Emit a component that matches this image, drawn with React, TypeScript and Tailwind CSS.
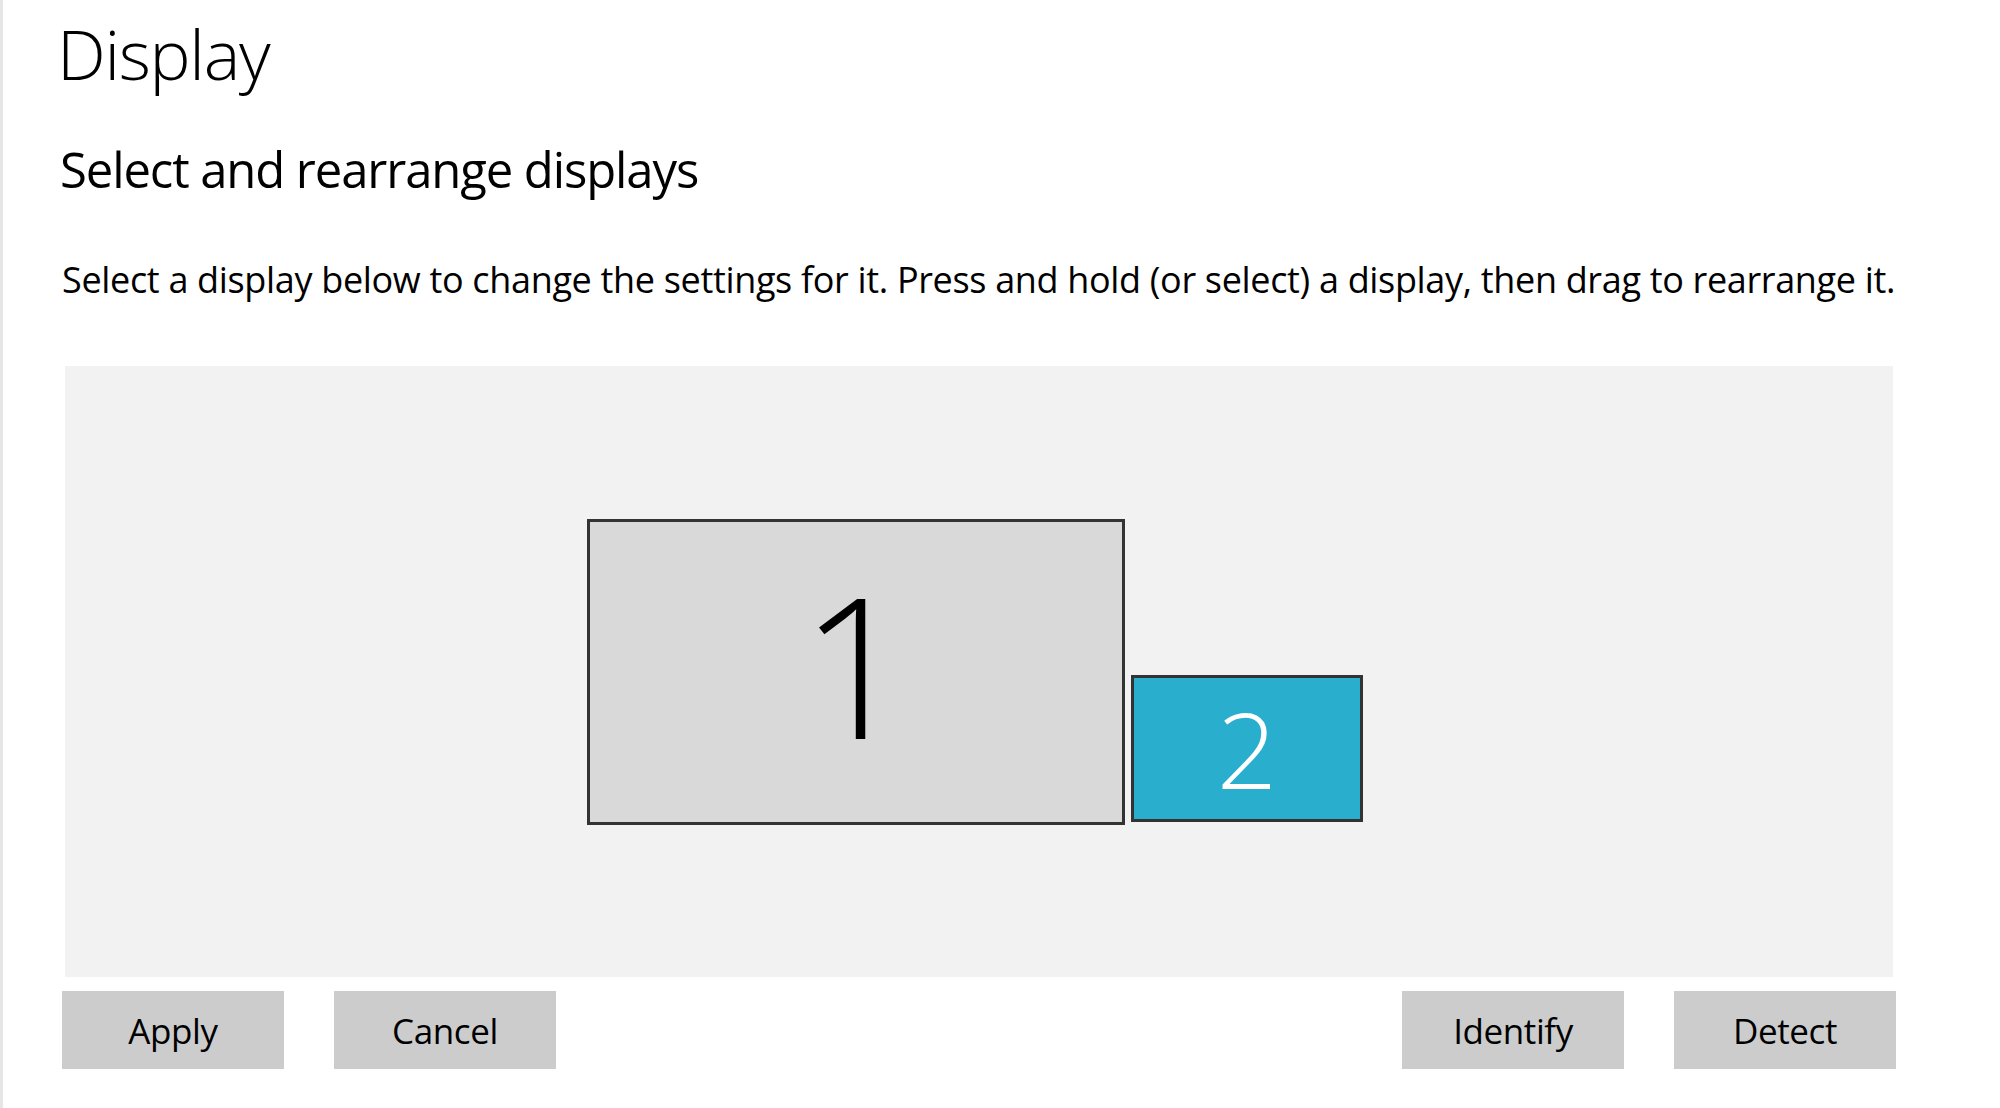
import React from "react";

const font = { fontFamily: '"Open Sans", "Noto Sans", sans-serif' };

function Monitor({
  n,
  className,
  numClass,
}: {
  n: string;
  className: string;
  numClass: string;
}) {
  return (
    <div
      className={`flex items-center justify-center border-[3px] border-[#333333] ${className}`}
    >
      <span className={numClass}>{n}</span>
    </div>
  );
}

function Btn({ label }: { label: string }) {
  return (
    <button className="flex h-[78px] w-[222px] items-center justify-center bg-[#cccccc] text-[35px] leading-none tracking-[-0.4px] text-black">
      {label}
    </button>
  );
}

export default function App() {
  return (
    <div className="flex h-[1108px] w-full bg-white text-black" style={font}>
      {/* left edge line */}
      <div className="w-[3px] shrink-0 bg-[#e6e6e6]" />

      <div className="flex flex-col pl-[59px] pt-[19px]">
        <h1 className="-ml-[5px] text-[69px] font-light leading-none tracking-[-1.3px]">
          Display
        </h1>

        <h2 className="-ml-[2px] mt-[57px] text-[49px] font-normal leading-none tracking-[-1.1px]">
          Select and rearrange displays
        </h2>

        <p className="mt-[68px] text-[36px] leading-none tracking-[-0.33px]">
          Select a display below to change the settings for it. Press and hold
          (or select) a display, then drag to rearrange it.
        </p>

        {/* arrangement canvas */}
        <div className="ml-[3px] mt-[68px] flex h-[611px] w-[1828px] items-center justify-center bg-[#f2f2f2]">
          <div className="flex items-end gap-[6px] pr-[8px]">
            <Monitor
              n="1"
              className="h-[306px] w-[538px] bg-[#d9d9d9]"
              numClass="mb-[18px] text-[196px] font-light leading-none text-black"
            />
            <Monitor
              n="2"
              className="mb-[3px] h-[147px] w-[232px] bg-[#2aaecd]"
              numClass="text-[106px] font-light leading-none text-white"
            />
          </div>
        </div>

        {/* actions */}
        <div className="mt-[14px] flex w-[1834px] justify-between">
          <div className="flex gap-[50px]">
            <Btn label="Apply" />
            <Btn label="Cancel" />
          </div>
          <div className="flex gap-[50px]">
            <Btn label="Identify" />
            <Btn label="Detect" />
          </div>
        </div>
      </div>
    </div>
  );
}
